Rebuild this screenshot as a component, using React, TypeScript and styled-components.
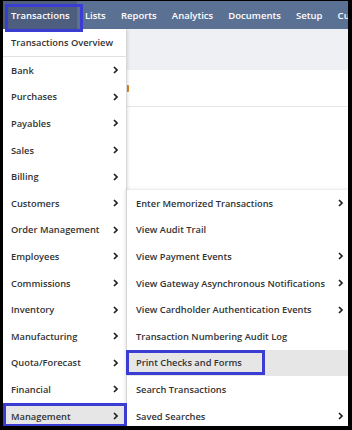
import React from "react";
import styled, { createGlobalStyle } from "styled-components";

const GlobalStyle = createGlobalStyle`
  html, body {
    margin: 0;
    padding: 0;
    background: #000;
  }
  body {
    font-family: "Open Sans", "Liberation Sans", sans-serif;
  }
`;

const ROW = 26.6;

const Frame = styled.div`
  width: 352px;
  height: 430px;
  box-sizing: border-box;
  padding: 1px 4px 4px 3px;
  background: #000;
`;

const Screen = styled.div`
  position: relative;
  width: 100%;
  height: 100%;
  overflow: hidden;
  background: #fff;
  display: flex;
  flex-direction: column;
`;

const NavBar = styled.nav`
  height: 28px;
  flex-shrink: 0;
  display: flex;
  align-items: stretch;
  padding-left: 0.4px;
  background: #5b7194;
`;

const NavItem = styled.div<{ $active?: boolean }>`
  position: relative;
  display: flex;
  align-items: center;
  padding: 0 7.6px;
  color: #fff;
  font-size: 9.5px;
  font-weight: 600;
  white-space: nowrap;
  background: ${(p) => (p.$active ? "#4d5e7e" : "transparent")};
`;

const Mark = styled.span<{ $l: number; $t: number; $w: number; $h: number }>`
  position: absolute;
  left: ${(p) => p.$l}px;
  top: ${(p) => p.$t}px;
  width: ${(p) => p.$w}px;
  height: ${(p) => p.$h}px;
  box-sizing: border-box;
  border: 3px solid #3a3cd2;
  z-index: 5;
  pointer-events: none;
`;

const Page = styled.div`
  flex: 1;
  display: flex;
  flex-direction: column;
`;

const PageHeader = styled.div`
  height: 41px;
  background: #eef0f4;
`;

const PageTitle = styled.div`
  height: 36px;
  border-bottom: 1px solid #e4e6ea;
  padding-left: 123px;
  display: flex;
  align-items: center;
`;

const PageIcon = styled.span`
  width: 3px;
  height: 7px;
  background: #d9822b;
  border-radius: 1px;
`;

const Menu = styled.div`
  position: absolute;
  top: 28px;
  left: 0;
  width: 123px;
  background: #fff;
  border-right: 1px solid #d9d9d9;
  box-shadow: 1px 1px 3px rgba(0, 0, 0, 0.12);
  z-index: 2;
`;

const Overview = styled.div`
  height: 27px;
  display: flex;
  align-items: center;
  padding-left: 8px;
  border-bottom: 1px solid #e1e1e1;
  color: #333;
  font-size: 9.3px;
  font-weight: 600;
  white-space: nowrap;
`;

const Row = styled.div<{ $active?: boolean; $pl: number }>`
  position: relative;
  height: ${ROW}px;
  display: flex;
  align-items: center;
  justify-content: space-between;
  padding: 0 8px 0 ${(p) => p.$pl}px;
  color: #333;
  font-size: 9.3px;
  font-weight: 600;
  white-space: nowrap;
  background: ${(p) => (p.$active ? "#e6e6e6" : "transparent")};
`;

const SubMenu = styled.div`
  position: absolute;
  left: 100%;
  top: ${28 + ROW * 5}px;
  width: 226px;
  background: #fff;
  border-left: 1px solid #d6d6d6;
  box-shadow: -1px -1px 3px rgba(0, 0, 0, 0.1);
  & > div {
    padding-right: 10px;
  }
`;

const Chevron = () => (
  <svg width="5" height="8" viewBox="0 0 5 8">
    <path d="M1 1 L4 4 L1 7" fill="none" stroke="#222" strokeWidth="1.7" />
  </svg>
);

const navItems = ["Transactions", "Lists", "Reports", "Analytics", "Documents", "Setup", "Customization"];

const menuItems = [
  "Bank",
  "Purchases",
  "Payables",
  "Sales",
  "Billing",
  "Customers",
  "Order Management",
  "Employees",
  "Commissions",
  "Inventory",
  "Manufacturing",
  "Quota/Forecast",
  "Financial",
  "Management",
];

const subItems: [string, boolean][] = [
  ["Enter Memorized Transactions", true],
  ["View Audit Trail", false],
  ["View Payment Events", true],
  ["View Gateway Asynchronous Notifications", true],
  ["View Cardholder Authentication Events", true],
  ["Transaction Numbering Audit Log", false],
  ["Print Checks and Forms", false],
  ["Search Transactions", false],
  ["Saved Searches", true],
];

export default function App() {
  return (
    <>
      <GlobalStyle />
      <Frame>
        <Screen>
          <NavBar>
            {navItems.map((n, i) => (
              <NavItem key={n} $active={i === 0}>
                {n}
                {i === 0 && <Mark $l={2} $t={3} $w={78} $h={28} />}
              </NavItem>
            ))}
          </NavBar>
          <Page>
            <PageHeader />
            <PageTitle>
              <PageIcon />
            </PageTitle>
          </Page>
          <Menu>
            <Overview>Transactions Overview</Overview>
            {menuItems.map((m) => (
              <Row key={m} $pl={8} $active={m === "Management"}>
                {m}
                <Chevron />
                {m === "Management" && <Mark $l={0} $t={0} $w={124} $h={24} />}
              </Row>
            ))}
            <SubMenu>
              {subItems.map(([s, more]) => (
                <Row key={s} $pl={9} $active={s === "Print Checks and Forms"}>
                  {s}
                  {more && <Chevron />}
                  {s === "Print Checks and Forms" && <Mark $l={-1} $t={0} $w={139} $h={25} />}
                </Row>
              ))}
            </SubMenu>
          </Menu>
        </Screen>
      </Frame>
    </>
  );
}
